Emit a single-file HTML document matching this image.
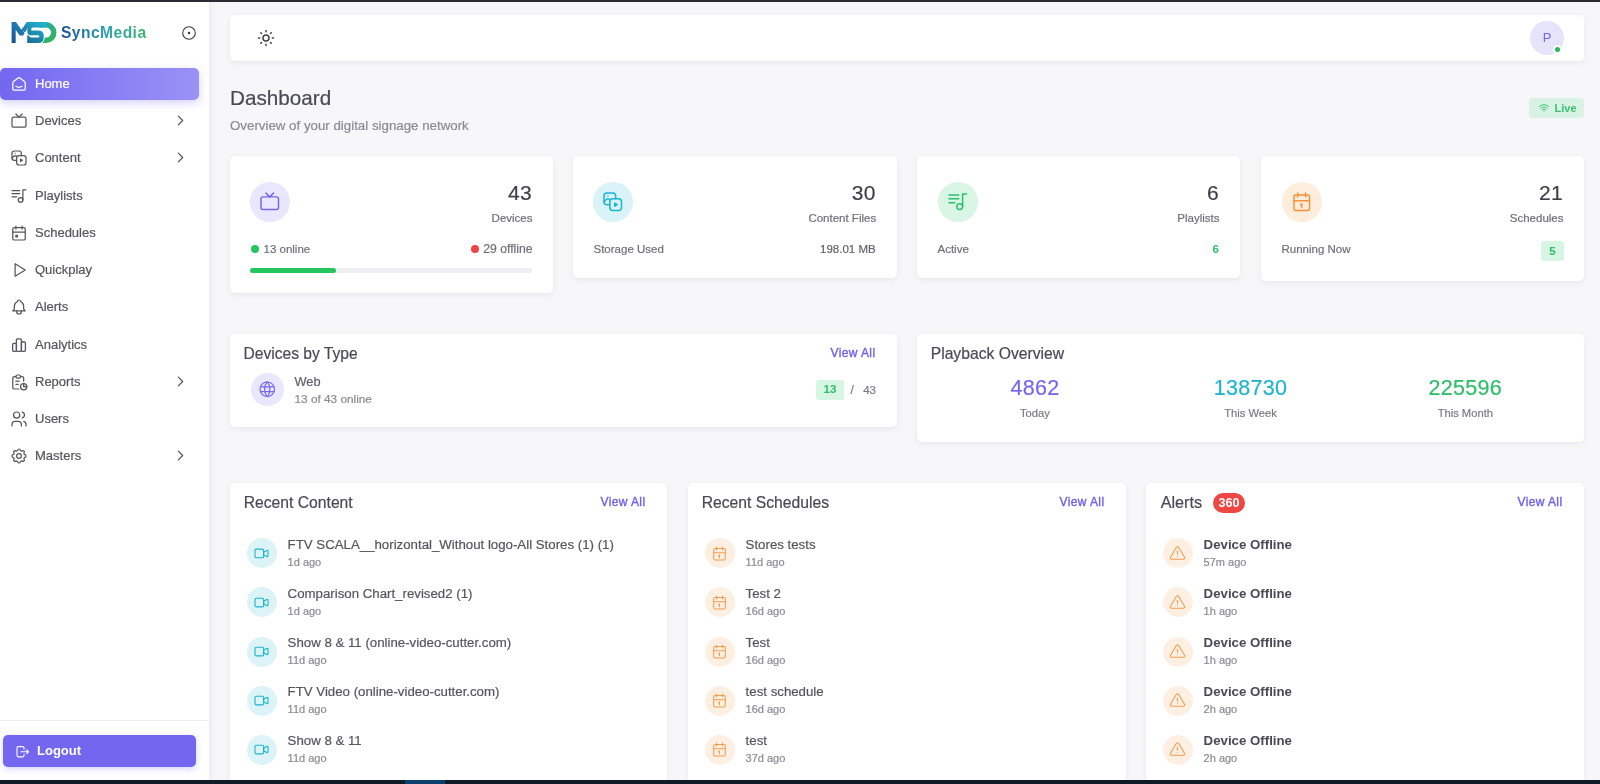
<!DOCTYPE html>
<html><head><meta charset="utf-8">
<style>
*{box-sizing:border-box;margin:0;padding:0}
html,body{width:1600px;height:784px;overflow:hidden}
body{font-family:"Liberation Sans",sans-serif;background:#f7f7fa;position:relative;color:#4b4b58}
svg{display:block;overflow:visible}
.topbar{position:absolute;z-index:5;left:0;top:0;width:1600px;height:2px;background:#2b2b33}
.botbar{position:absolute;left:0;top:780px;width:1600px;height:4px;background:#0f1b26}
.botbar i{position:absolute;left:405px;top:0;width:40px;height:4px;background:#0b3f6e}
.side{position:absolute;left:0;top:0;width:209px;height:780px;background:#fff;box-shadow:2px 0 6px rgba(60,60,90,.07)}
.card{position:absolute;background:#fff;border-radius:5px;box-shadow:0 2px 6px rgba(60,60,90,.08)}
.abs{position:absolute;white-space:nowrap}
.card,.side{will-change:transform}
body>div.abs{will-change:transform}
body{-webkit-text-stroke:.2px}
.mi{position:absolute;left:0;width:199px;height:32px;color:#55555f;font-size:13px}
.mi .ic{position:absolute;left:11.5px;top:9px}
.mi .tx{position:absolute;left:35px;top:0;line-height:32px}
.mi .cv{position:absolute;left:174px;top:9px}
.mi.act{background:linear-gradient(90deg,#7367f0,#9a92f6);color:#fff;border-radius:5px;box-shadow:0 3px 8px rgba(115,103,240,.3)}
</style></head><body>
<div class="topbar"></div>

<div class="side">
<svg class="abs" style="left:9px;top:19px" width="50" height="27" viewBox="0 0 50 27"><defs><linearGradient id="lgm" gradientUnits="userSpaceOnUse" x1="2" y1="24" x2="22" y2="3"><stop offset="0" stop-color="#1a4f90"/><stop offset="1" stop-color="#2596c9"/></linearGradient><linearGradient id="lgs" gradientUnits="userSpaceOnUse" x1="18" y1="24" x2="30" y2="3"><stop offset="0" stop-color="#1a6a92"/><stop offset="1" stop-color="#1fb0cf"/></linearGradient><linearGradient id="lgd" gradientUnits="userSpaceOnUse" x1="30" y1="3" x2="44" y2="24"><stop offset="0" stop-color="#22a9b8"/><stop offset="1" stop-color="#35b552"/></linearGradient></defs>
<path fill="url(#lgm)" d="M2.6 24.1V3.1H6.9L12.4 10.8L17.9 3.1H22L14.2 16.6H10.6L6.7 10.8V24.1Z"/>
<path fill="url(#lgd)" d="M30 3.1H37A10.5 10.5 0 0 1 37 24.1H33.6L36.2 18.6H37A5 5 0 0 0 37 8.6H30Z"/>
<path fill="url(#lgs)" d="M19.3 3.1H37.5V8.5H23.6Q22 8.5 22.4 11.4H30Q34.8 11.4 34.8 17.6Q34.8 24.1 30 24.1H18.2V15.6L21.6 18.6H29.6Q30.6 18.4 30.2 17.1Q29.8 16.3 28.6 16.3H21.2Q18.3 16 18.3 11.4Q18.3 3.1 19.3 3.1Z"/>
<path d="M14.6 12.4L18.6 16.4" stroke="#fff" stroke-width=".9"/>
</svg>
<div class="abs" style="left:61px;top:24.2px;font-size:15.6px;font-weight:bold;-webkit-text-stroke:0;letter-spacing:.45px;background:linear-gradient(90deg,#1f4f97,#27a0b3 50%,#3db56a);-webkit-background-clip:text;background-clip:text;color:transparent">SyncMedia</div>
<div class="abs" style="left:182px;top:26px;color:#3a3a44"><svg width="14.0" height="14.0" viewBox="2 2 20 20" fill="none" stroke="currentColor" stroke-width="1.6" stroke-linecap="round" stroke-linejoin="round" ><path d="M11 12a1 1 0 1 0 2 0a1 1 0 1 0 -2 0" fill="currentColor"/><path d="M3 12a9 9 0 1 0 18 0a9 9 0 1 0 -18 0"/></svg></div>
<div class="mi act" style="top:68.00px"><div class="ic"><svg width="14.0" height="14.0" viewBox="3 3 18 18" fill="none" stroke="currentColor" stroke-width="1.6" stroke-linecap="round" stroke-linejoin="round" ><path d="M19 8.71l-5.333 -4.148a2.666 2.666 0 0 0 -3.274 0l-5.334 4.148a2.665 2.665 0 0 0 -1.029 2.105v7.2a2 2 0 0 0 2 2h12a2 2 0 0 0 2 -2v-7.2c0 -.823 -.38 -1.6 -1.03 -2.105"/><path d="M16 15c-2.21 1.333 -5.792 1.333 -8 0"/></svg></div><div class="tx">Home</div></div>
<div class="mi" style="top:105.22px"><div class="ic"><svg width="14.0" height="14.0" viewBox="3 3 18 18" fill="none" stroke="currentColor" stroke-width="1.6" stroke-linecap="round" stroke-linejoin="round" ><path d="M3 9a2 2 0 0 1 2 -2h14a2 2 0 0 1 2 2v9a2 2 0 0 1 -2 2h-14a2 2 0 0 1 -2 -2v-9z"/><path d="M16 3l-4 4l-4 -4"/></svg></div><div class="tx">Devices</div><div class="cv"><svg width="13.0" height="13.0" viewBox="3 3 18 18" fill="none" stroke="currentColor" stroke-width="1.7" stroke-linecap="round" stroke-linejoin="round" ><path d="M9 6l6 6l-6 6"/></svg></div></div>
<div class="mi" style="top:142.44px"><div class="ic"><svg width="14.0" height="14.0" viewBox="3 3 18 18" fill="none" stroke="currentColor" stroke-width="1.6" stroke-linecap="round" stroke-linejoin="round" ><path d="M9 15h-3a3 3 0 0 1 -3 -3v-6a3 3 0 0 1 3 -3h6a3 3 0 0 1 3 3v3"/><path d="M9 12a3 3 0 0 1 3 -3h6a3 3 0 0 1 3 3v6a3 3 0 0 1 -3 3h-6a3 3 0 0 1 -3 -3z"/><path d="M3 12l2.296 -2.296a2.41 2.41 0 0 1 3.408 0l.296 .296"/><path d="M14 13.5v3l2.5 -1.5z"/><path d="M7 6v.01"/></svg></div><div class="tx">Content</div><div class="cv"><svg width="13.0" height="13.0" viewBox="3 3 18 18" fill="none" stroke="currentColor" stroke-width="1.7" stroke-linecap="round" stroke-linejoin="round" ><path d="M9 6l6 6l-6 6"/></svg></div></div>
<div class="mi" style="top:179.66px"><div class="ic"><svg width="14.0" height="14.0" viewBox="3 3 18 18" fill="none" stroke="currentColor" stroke-width="1.6" stroke-linecap="round" stroke-linejoin="round" ><path d="M11 17a3 3 0 1 0 6 0a3 3 0 1 0 -6 0"/><path d="M17 17v-13h4"/><path d="M13 5h-10"/><path d="M3 9l10 0"/><path d="M9 13h-6"/></svg></div><div class="tx">Playlists</div></div>
<div class="mi" style="top:216.88px"><div class="ic"><svg width="14.0" height="14.0" viewBox="3 3 18 18" fill="none" stroke="currentColor" stroke-width="1.6" stroke-linecap="round" stroke-linejoin="round" ><path d="M4 7a2 2 0 0 1 2 -2h12a2 2 0 0 1 2 2v12a2 2 0 0 1 -2 2h-12a2 2 0 0 1 -2 -2z"/><path d="M16 3l0 4"/><path d="M8 3l0 4"/><path d="M4 11l16 0"/><path d="M8 15h2v2h-2z"/></svg></div><div class="tx">Schedules</div></div>
<div class="mi" style="top:254.10px"><div class="ic"><svg width="14.0" height="14.0" viewBox="3 3 18 18" fill="none" stroke="currentColor" stroke-width="1.6" stroke-linecap="round" stroke-linejoin="round" ><path d="M7 4v16l13 -8z"/></svg></div><div class="tx">Quickplay</div></div>
<div class="mi" style="top:291.32px"><div class="ic"><svg width="14.0" height="14.0" viewBox="3 3 18 18" fill="none" stroke="currentColor" stroke-width="1.6" stroke-linecap="round" stroke-linejoin="round" ><path d="M10 5a2 2 0 1 1 4 0a7 7 0 0 1 4 6v3a4 4 0 0 0 2 3h-16a4 4 0 0 0 2 -3v-3a7 7 0 0 1 4 -6"/><path d="M9 17v1a3 3 0 0 0 6 0v-1"/></svg></div><div class="tx">Alerts</div></div>
<div class="mi" style="top:328.54px"><div class="ic"><svg width="14.0" height="14.0" viewBox="0 0 14 14" fill="none" stroke="currentColor" stroke-width="1.3" stroke-linecap="round" stroke-linejoin="round" ><rect x=".65" y="5.4" width="3.75" height="7.9" rx="1"/><rect x="4.4" y=".9" width="5" height="12.4" rx="1"/><rect x="9.4" y="4" width="4" height="9.3" rx="1"/></svg></div><div class="tx">Analytics</div></div>
<div class="mi" style="top:365.76px"><div class="ic"><svg width="14.0" height="14.0" viewBox="3 3 18 18" fill="none" stroke="currentColor" stroke-width="1.6" stroke-linecap="round" stroke-linejoin="round" ><path d="M8 5h-2a2 2 0 0 0 -2 2v12a2 2 0 0 0 2 2h5.697"/><path d="M18 14v4h4"/><path d="M18 11v-4a2 2 0 0 0 -2 -2h-2"/><path d="M8 5a2 2 0 0 1 2 -2h2a2 2 0 0 1 2 2v0a2 2 0 0 1 -2 2h-2a2 2 0 0 1 -2 -2z"/><path d="M14 18a4 4 0 1 0 8 0a4 4 0 1 0 -8 0"/><path d="M8 11h4"/><path d="M8 15h3"/></svg></div><div class="tx">Reports</div><div class="cv"><svg width="13.0" height="13.0" viewBox="3 3 18 18" fill="none" stroke="currentColor" stroke-width="1.7" stroke-linecap="round" stroke-linejoin="round" ><path d="M9 6l6 6l-6 6"/></svg></div></div>
<div class="mi" style="top:402.98px"><div class="ic"><svg width="14.0" height="14.0" viewBox="3 3 18 18" fill="none" stroke="currentColor" stroke-width="1.6" stroke-linecap="round" stroke-linejoin="round" ><path d="M5 7a4 4 0 1 0 8 0a4 4 0 1 0 -8 0"/><path d="M3 21v-2a4 4 0 0 1 4 -4h4a4 4 0 0 1 4 4v2"/><path d="M16 3.13a4 4 0 0 1 0 7.75"/><path d="M21 21v-2a4 4 0 0 0 -3 -3.85"/></svg></div><div class="tx">Users</div></div>
<div class="mi" style="top:440.20px"><div class="ic"><svg width="14.0" height="14.0" viewBox="3 3 18 18" fill="none" stroke="currentColor" stroke-width="1.6" stroke-linecap="round" stroke-linejoin="round" ><path d="M10.325 4.317c.426 -1.756 2.924 -1.756 3.35 0a1.724 1.724 0 0 0 2.573 1.066c1.543 -.94 3.31 .826 2.37 2.37a1.724 1.724 0 0 0 1.065 2.572c1.756 .426 1.756 2.924 0 3.35a1.724 1.724 0 0 0 -1.066 2.573c.94 1.543 -.826 3.31 -2.37 2.37a1.724 1.724 0 0 0 -2.572 1.065c-.426 1.756 -2.924 1.756 -3.35 0a1.724 1.724 0 0 0 -2.573 -1.066c-1.543 .94 -3.31 -.826 -2.37 -2.37a1.724 1.724 0 0 0 -1.065 -2.572c-1.756 -.426 -1.756 -2.924 0 -3.35a1.724 1.724 0 0 0 1.066 -2.573c-.94 -1.543 .826 -3.31 2.37 -2.37c1 .608 2.296 .07 2.572 -1.065z"/><path d="M9 12a3 3 0 1 0 6 0a3 3 0 0 0 -6 0"/></svg></div><div class="tx">Masters</div><div class="cv"><svg width="13.0" height="13.0" viewBox="3 3 18 18" fill="none" stroke="currentColor" stroke-width="1.7" stroke-linecap="round" stroke-linejoin="round" ><path d="M9 6l6 6l-6 6"/></svg></div></div>
<div class="abs" style="left:0;top:720px;width:209px;height:1px;background:#ececf0"></div>
<div class="abs" style="left:3px;top:735px;width:193px;height:32px;background:#7367f0;border-radius:5px;box-shadow:0 2px 6px rgba(115,103,240,.3);color:#fff"><div class="abs" style="left:14px;top:10.5px"><svg width="11.5" height="11.5" viewBox="3 3 18 18" fill="none" stroke="currentColor" stroke-width="1.7" stroke-linecap="round" stroke-linejoin="round" ><path d="M14 8v-2a2 2 0 0 0 -2 -2h-7a2 2 0 0 0 -2 2v12a2 2 0 0 0 2 2h7a2 2 0 0 0 2 -2v-2"/><path d="M9 12h12l-3 -3"/><path d="M18 15l3 -3"/></svg></div><div class="abs" style="left:34px;top:0;line-height:32px;font-size:13px;font-weight:bold;-webkit-text-stroke:0">Logout</div></div>
</div>
<div class="card" style="left:230px;top:15px;width:1354px;height:46px">
  <div class="abs" style="left:27px;top:14px;color:#44444e"><svg width="18.0" height="18.0" viewBox="3 3 18 18" fill="none" stroke="currentColor" stroke-width="1.5" stroke-linecap="round" stroke-linejoin="round" ><path d="M9 12a3 3 0 1 0 6 0a3 3 0 1 0 -6 0"/><path d="M12 4.5v1.2M12 18.3v1.2M4.5 12h1.2M18.3 12h1.2M6.7 6.7l.85 .85M16.45 16.45l.85 .85M6.7 17.3l.85 -.85M16.45 7.55l.85 -.85"/></svg></div>
  <div class="abs" style="left:1300px;top:6px;width:34px;height:34px;border-radius:50%;background:#e6e4fb;color:#7367f0;font-size:13px;line-height:34px;text-align:center;-webkit-text-stroke:0">P</div>
  <div class="abs" style="left:1325.1px;top:31.7px;width:5.2px;height:5.2px;border-radius:50%;background:#23b85c;box-shadow:0 0 0 2px #fff"></div>
</div>
<div class="abs" style="left:230px;top:85.8px;font-size:20.7px;color:#4a4a57">Dashboard</div>
<div class="abs" style="left:230px;top:118px;font-size:13.3px;color:#8a8a95">Overview of your digital signage network</div>
<div class="abs" style="left:1529px;top:98px;width:55px;height:20px;border-radius:4px;background:#d8f3e3;color:#3bbf73">
  <div class="abs" style="left:10px;top:5px"><svg width="10.0" height="10.0" viewBox="3 3 18 18" fill="none" stroke="currentColor" stroke-width="1.8" stroke-linecap="round" stroke-linejoin="round" ><path d="M12 18l.01 0"/><path d="M9.172 15.172a4 4 0 0 1 5.656 0"/><path d="M6.343 12.343a8 8 0 0 1 11.314 0"/><path d="M3.515 9.515c4.686 -4.687 12.284 -4.687 17 0"/></svg></div>
  <div class="abs" style="left:25.5px;top:2.7px;font-size:11px;font-weight:bold;-webkit-text-stroke:0;line-height:14px">Live</div>
</div>

<div class="card" style="left:230px;top:156px;width:323px;height:137px"><div class="abs" style="left:20px;top:25.7px;width:40px;height:40px;border-radius:50%;background:#e9e7fd;color:#7367f0"><div class="abs" style="left:11.25px;top:11.25px"><svg width="17.5" height="17.5" viewBox="3 3 18 18" fill="none" stroke="currentColor" stroke-width="1.5" stroke-linecap="round" stroke-linejoin="round" ><path d="M3 9a2 2 0 0 1 2 -2h14a2 2 0 0 1 2 2v9a2 2 0 0 1 -2 2h-14a2 2 0 0 1 -2 -2v-9z"/><path d="M16 3l-4 4l-4 -4"/></svg></div></div><div class="abs" style="right:21px;top:24.5px;font-size:21px;line-height:24px;color:#3f3f4a;letter-spacing:.3px">43</div><div class="abs" style="right:20.5px;top:55px;font-size:11.5px;line-height:14px;color:#6f6f7b">Devices</div><div class="abs" style="left:21px;top:89px;width:8px;height:8px;border-radius:50%;background:#22c55e"></div><div class="abs" style="left:33.5px;top:86px;font-size:11.5px;line-height:14px;color:#6f6f7b">13 online</div><div class="abs" style="left:240.5px;top:89px;width:8px;height:8px;border-radius:50%;background:#ef4444"></div><div class="abs" style="right:20.5px;top:85.7px;font-size:12.2px;line-height:14px;color:#6f6f7b">29 offline</div><div class="abs" style="left:20px;top:112px;width:282px;height:4.5px;border-radius:3px;background:#efeff3"><div style="width:85.5px;height:4.5px;border-radius:3px;background:#22c55e"></div></div></div>
<div class="card" style="left:573px;top:156px;width:323.67px;height:122px"><div class="abs" style="left:20px;top:25.7px;width:40px;height:40px;border-radius:50%;background:#d9f3f8;color:#19b4cf"><div class="abs" style="left:11.25px;top:11.25px"><svg width="17.5" height="17.5" viewBox="3 3 18 18" fill="none" stroke="currentColor" stroke-width="1.5" stroke-linecap="round" stroke-linejoin="round" ><path d="M9 15h-3a3 3 0 0 1 -3 -3v-6a3 3 0 0 1 3 -3h6a3 3 0 0 1 3 3v3"/><path d="M9 12a3 3 0 0 1 3 -3h6a3 3 0 0 1 3 3v6a3 3 0 0 1 -3 3h-6a3 3 0 0 1 -3 -3z"/><path d="M3 12l2.296 -2.296a2.41 2.41 0 0 1 3.408 0l.296 .296"/><path d="M14 13.5v3l2.5 -1.5z"/><path d="M7 6v.01"/></svg></div></div><div class="abs" style="right:21px;top:24.5px;font-size:21px;line-height:24px;color:#3f3f4a;letter-spacing:.3px">30</div><div class="abs" style="right:20.5px;top:55px;font-size:11.5px;line-height:14px;color:#6f6f7b">Content Files</div><div class="abs" style="left:20.5px;top:86px;font-size:11.5px;line-height:14px;color:#6f6f7b">Storage Used</div><div class="abs" style="right:21px;top:86px;font-size:11.5px;line-height:14px;color:#62626e">198.01 MB</div></div>
<div class="card" style="left:917.33px;top:156px;width:323px;height:122px"><div class="abs" style="left:21px;top:25.7px;width:40px;height:40px;border-radius:50%;background:#d9f5e4;color:#28c06a"><div class="abs" style="left:11.25px;top:11.25px"><svg width="17.5" height="17.5" viewBox="3 3 18 18" fill="none" stroke="currentColor" stroke-width="1.5" stroke-linecap="round" stroke-linejoin="round" ><path d="M11 17a3 3 0 1 0 6 0a3 3 0 1 0 -6 0"/><path d="M17 17v-13h4"/><path d="M13 5h-10"/><path d="M3 9l10 0"/><path d="M9 13h-6"/></svg></div></div><div class="abs" style="right:21px;top:24.5px;font-size:21px;line-height:24px;color:#3f3f4a;letter-spacing:.3px">6</div><div class="abs" style="right:20.5px;top:55px;font-size:11.5px;line-height:14px;color:#6f6f7b">Playlists</div><div class="abs" style="left:20.5px;top:86px;font-size:11.5px;line-height:14px;color:#6f6f7b">Active</div><div class="abs" style="right:21px;top:86px;font-size:11.5px;line-height:14px;color:#28c06a;font-weight:bold;-webkit-text-stroke:0">6</div></div>
<div class="card" style="left:1261px;top:156px;width:323px;height:125px"><div class="abs" style="left:20.5px;top:25.8px;width:40px;height:40px;border-radius:50%;background:#fdeddc;color:#f7913a"><div class="abs" style="left:11.25px;top:11.25px"><svg width="17.5" height="17.5" viewBox="3 3 18 18" fill="none" stroke="currentColor" stroke-width="1.5" stroke-linecap="round" stroke-linejoin="round" ><path d="M4 7a2 2 0 0 1 2 -2h12a2 2 0 0 1 2 2v12a2 2 0 0 1 -2 2h-12a2 2 0 0 1 -2 -2z"/><path d="M16 3v4"/><path d="M8 3v4"/><path d="M4 11h16"/><path d="M11 15l1 -1v4"/></svg></div></div><div class="abs" style="right:21px;top:24.5px;font-size:21px;line-height:24px;color:#3f3f4a;letter-spacing:.3px">21</div><div class="abs" style="right:20.5px;top:55px;font-size:11.5px;line-height:14px;color:#6f6f7b">Schedules</div><div class="abs" style="left:20.5px;top:86px;font-size:11.5px;line-height:14px;color:#6f6f7b">Running Now</div><div class="abs" style="left:280px;top:85px;width:23px;height:20px;border-radius:3px;background:#d6f5e2;color:#28c06a;font-size:11.5px;font-weight:bold;-webkit-text-stroke:0;line-height:20px;text-align:center">5</div></div>
<div class="card" style="left:230px;top:334px;width:667px;height:93px">
  <div class="abs" style="left:13.5px;top:10.5px;font-size:15.6px;line-height:18px;color:#4a4a57">Devices by Type</div>
  <div class="abs" style="right:21.5px;top:12px;font-size:12px;line-height:14px;color:#6c60ea;letter-spacing:.4px;-webkit-text-stroke:.35px">View All</div>
  <div class="abs" style="left:20.5px;top:39px;width:33px;height:33px;border-radius:50%;background:#e9e7fd;color:#7367f0"><div class="abs" style="left:9.25px;top:9.25px"><svg width="14.5" height="14.5" viewBox="3 3 18 18" fill="none" stroke="currentColor" stroke-width="1.5" stroke-linecap="round" stroke-linejoin="round" ><path d="M3 12a9 9 0 1 0 18 0a9 9 0 0 0 -18 0"/><path d="M3.6 9h16.8"/><path d="M3.6 15h16.8"/><path d="M11.5 3a17 17 0 0 0 0 18"/><path d="M12.5 3a17 17 0 0 1 0 18"/></svg></div></div>
  <div class="abs" style="left:64.5px;top:40px;font-size:12.8px;line-height:15px;color:#60606c">Web</div>
  <div class="abs" style="left:64.5px;top:57.5px;font-size:11.8px;line-height:14px;color:#8a8a95">13 of 43 online</div>
  <div class="abs" style="left:586px;top:46px;width:28px;height:19.5px;border-radius:3px;background:#d6f5e2;color:#28c06a;font-size:11.5px;font-weight:bold;-webkit-text-stroke:0;line-height:19.5px;text-align:center">13</div>
  <div class="abs" style="left:620.5px;top:48.5px;font-size:12px;line-height:14px;color:#7a7a86">/</div>
  <div class="abs" style="right:21px;top:48.5px;font-size:11.5px;line-height:14px;color:#7a7a86">43</div>
</div>
<div class="card" style="left:917.33px;top:334px;width:666.67px;height:108px">
  <div class="abs" style="left:13.7px;top:10.5px;font-size:15.7px;line-height:18px;color:#4a4a57">Playback Overview</div>
  <div class="abs" style="left:17.9px;top:41.5px;width:200px;text-align:center;font-size:21.5px;line-height:24px;color:#7367f0;letter-spacing:.3px">4862</div>
  <div class="abs" style="left:17.9px;top:72px;width:200px;text-align:center;font-size:11.2px;line-height:14px;color:#7a7a86">Today</div>
  <div class="abs" style="left:233.6px;top:41.5px;width:200px;text-align:center;font-size:21.5px;line-height:24px;color:#1fb5cf;letter-spacing:.3px">138730</div>
  <div class="abs" style="left:233.6px;top:72px;width:200px;text-align:center;font-size:11.2px;line-height:14px;color:#7a7a86">This Week</div>
  <div class="abs" style="left:448.3px;top:41.5px;width:200px;text-align:center;font-size:21.5px;line-height:24px;color:#2bbf68;letter-spacing:.3px">225596</div>
  <div class="abs" style="left:448.3px;top:72px;width:200px;text-align:center;font-size:11.2px;line-height:14px;color:#7a7a86">This Month</div>
</div>

<div class="card" style="left:230px;top:483px;width:437px;height:320px"><div class="abs" style="left:13.7px;top:10.7px;font-size:15.7px;line-height:18px;color:#4a4a57">Recent Content</div><div class="abs" style="right:21.5px;top:12px;font-size:12px;line-height:14px;color:#6c60ea;letter-spacing:.4px;-webkit-text-stroke:.35px">View All</div><div class="abs" style="left:16.5px;top:55.40px;width:30px;height:30px;border-radius:50%;background:#dcf3f7;color:#19b4cf"><div class="abs" style="left:8.5px;top:8.5px"><svg width="13.0" height="13.0" viewBox="3 3 18 18" fill="none" stroke="currentColor" stroke-width="1.5" stroke-linecap="round" stroke-linejoin="round" ><path d="M15 10l4.553 -2.276a1 1 0 0 1 1.447 .894v6.764a1 1 0 0 1 -1.447 .894l-4.553 -2.276v-4z"/><path d="M3 8a2 2 0 0 1 2 -2h8a2 2 0 0 1 2 2v8a2 2 0 0 1 -2 2h-8a2 2 0 0 1 -2 -2z"/></svg></div></div><div class="abs" style="left:57.6px;top:53.90px;font-size:13.25px;line-height:16px;color:#55555f;">FTV SCALA__horizontal_Without logo-All Stores (1) (1)</div><div class="abs" style="left:57.6px;top:72.90px;font-size:11px;line-height:13px;color:#8a8a95">1d ago</div><div class="abs" style="left:16.5px;top:104.45px;width:30px;height:30px;border-radius:50%;background:#dcf3f7;color:#19b4cf"><div class="abs" style="left:8.5px;top:8.5px"><svg width="13.0" height="13.0" viewBox="3 3 18 18" fill="none" stroke="currentColor" stroke-width="1.5" stroke-linecap="round" stroke-linejoin="round" ><path d="M15 10l4.553 -2.276a1 1 0 0 1 1.447 .894v6.764a1 1 0 0 1 -1.447 .894l-4.553 -2.276v-4z"/><path d="M3 8a2 2 0 0 1 2 -2h8a2 2 0 0 1 2 2v8a2 2 0 0 1 -2 2h-8a2 2 0 0 1 -2 -2z"/></svg></div></div><div class="abs" style="left:57.6px;top:102.95px;font-size:13.25px;line-height:16px;color:#55555f;">Comparison Chart_revised2 (1)</div><div class="abs" style="left:57.6px;top:121.95px;font-size:11px;line-height:13px;color:#8a8a95">1d ago</div><div class="abs" style="left:16.5px;top:153.50px;width:30px;height:30px;border-radius:50%;background:#dcf3f7;color:#19b4cf"><div class="abs" style="left:8.5px;top:8.5px"><svg width="13.0" height="13.0" viewBox="3 3 18 18" fill="none" stroke="currentColor" stroke-width="1.5" stroke-linecap="round" stroke-linejoin="round" ><path d="M15 10l4.553 -2.276a1 1 0 0 1 1.447 .894v6.764a1 1 0 0 1 -1.447 .894l-4.553 -2.276v-4z"/><path d="M3 8a2 2 0 0 1 2 -2h8a2 2 0 0 1 2 2v8a2 2 0 0 1 -2 2h-8a2 2 0 0 1 -2 -2z"/></svg></div></div><div class="abs" style="left:57.6px;top:152.00px;font-size:13.25px;line-height:16px;color:#55555f;">Show 8 &amp; 11 (online-video-cutter.com)</div><div class="abs" style="left:57.6px;top:171.00px;font-size:11px;line-height:13px;color:#8a8a95">11d ago</div><div class="abs" style="left:16.5px;top:202.55px;width:30px;height:30px;border-radius:50%;background:#dcf3f7;color:#19b4cf"><div class="abs" style="left:8.5px;top:8.5px"><svg width="13.0" height="13.0" viewBox="3 3 18 18" fill="none" stroke="currentColor" stroke-width="1.5" stroke-linecap="round" stroke-linejoin="round" ><path d="M15 10l4.553 -2.276a1 1 0 0 1 1.447 .894v6.764a1 1 0 0 1 -1.447 .894l-4.553 -2.276v-4z"/><path d="M3 8a2 2 0 0 1 2 -2h8a2 2 0 0 1 2 2v8a2 2 0 0 1 -2 2h-8a2 2 0 0 1 -2 -2z"/></svg></div></div><div class="abs" style="left:57.6px;top:201.05px;font-size:13.25px;line-height:16px;color:#55555f;">FTV Video (online-video-cutter.com)</div><div class="abs" style="left:57.6px;top:220.05px;font-size:11px;line-height:13px;color:#8a8a95">11d ago</div><div class="abs" style="left:16.5px;top:251.60px;width:30px;height:30px;border-radius:50%;background:#dcf3f7;color:#19b4cf"><div class="abs" style="left:8.5px;top:8.5px"><svg width="13.0" height="13.0" viewBox="3 3 18 18" fill="none" stroke="currentColor" stroke-width="1.5" stroke-linecap="round" stroke-linejoin="round" ><path d="M15 10l4.553 -2.276a1 1 0 0 1 1.447 .894v6.764a1 1 0 0 1 -1.447 .894l-4.553 -2.276v-4z"/><path d="M3 8a2 2 0 0 1 2 -2h8a2 2 0 0 1 2 2v8a2 2 0 0 1 -2 2h-8a2 2 0 0 1 -2 -2z"/></svg></div></div><div class="abs" style="left:57.6px;top:250.10px;font-size:13.25px;line-height:16px;color:#55555f;">Show 8 &amp; 11</div><div class="abs" style="left:57.6px;top:269.10px;font-size:11px;line-height:13px;color:#8a8a95">11d ago</div></div>
<div class="card" style="left:688px;top:483px;width:438px;height:320px"><div class="abs" style="left:13.7px;top:10.7px;font-size:15.7px;line-height:18px;color:#4a4a57">Recent Schedules</div><div class="abs" style="right:21.5px;top:12px;font-size:12px;line-height:14px;color:#6c60ea;letter-spacing:.4px;-webkit-text-stroke:.35px">View All</div><div class="abs" style="left:16.5px;top:55.40px;width:30px;height:30px;border-radius:50%;background:#fdf0e2;color:#f59a4e"><div class="abs" style="left:8.5px;top:8.5px"><svg width="13.0" height="13.0" viewBox="3 3 18 18" fill="none" stroke="currentColor" stroke-width="1.4" stroke-linecap="round" stroke-linejoin="round" ><path d="M4 7a2 2 0 0 1 2 -2h12a2 2 0 0 1 2 2v12a2 2 0 0 1 -2 2h-12a2 2 0 0 1 -2 -2z"/><path d="M16 3v4"/><path d="M8 3v4"/><path d="M4 11h16"/><path d="M11 15l1 -1v4"/></svg></div></div><div class="abs" style="left:57.6px;top:53.90px;font-size:13.25px;line-height:16px;color:#55555f;">Stores tests</div><div class="abs" style="left:57.6px;top:72.90px;font-size:11px;line-height:13px;color:#8a8a95">11d ago</div><div class="abs" style="left:16.5px;top:104.45px;width:30px;height:30px;border-radius:50%;background:#fdf0e2;color:#f59a4e"><div class="abs" style="left:8.5px;top:8.5px"><svg width="13.0" height="13.0" viewBox="3 3 18 18" fill="none" stroke="currentColor" stroke-width="1.4" stroke-linecap="round" stroke-linejoin="round" ><path d="M4 7a2 2 0 0 1 2 -2h12a2 2 0 0 1 2 2v12a2 2 0 0 1 -2 2h-12a2 2 0 0 1 -2 -2z"/><path d="M16 3v4"/><path d="M8 3v4"/><path d="M4 11h16"/><path d="M11 15l1 -1v4"/></svg></div></div><div class="abs" style="left:57.6px;top:102.95px;font-size:13.25px;line-height:16px;color:#55555f;">Test 2</div><div class="abs" style="left:57.6px;top:121.95px;font-size:11px;line-height:13px;color:#8a8a95">16d ago</div><div class="abs" style="left:16.5px;top:153.50px;width:30px;height:30px;border-radius:50%;background:#fdf0e2;color:#f59a4e"><div class="abs" style="left:8.5px;top:8.5px"><svg width="13.0" height="13.0" viewBox="3 3 18 18" fill="none" stroke="currentColor" stroke-width="1.4" stroke-linecap="round" stroke-linejoin="round" ><path d="M4 7a2 2 0 0 1 2 -2h12a2 2 0 0 1 2 2v12a2 2 0 0 1 -2 2h-12a2 2 0 0 1 -2 -2z"/><path d="M16 3v4"/><path d="M8 3v4"/><path d="M4 11h16"/><path d="M11 15l1 -1v4"/></svg></div></div><div class="abs" style="left:57.6px;top:152.00px;font-size:13.25px;line-height:16px;color:#55555f;">Test</div><div class="abs" style="left:57.6px;top:171.00px;font-size:11px;line-height:13px;color:#8a8a95">16d ago</div><div class="abs" style="left:16.5px;top:202.55px;width:30px;height:30px;border-radius:50%;background:#fdf0e2;color:#f59a4e"><div class="abs" style="left:8.5px;top:8.5px"><svg width="13.0" height="13.0" viewBox="3 3 18 18" fill="none" stroke="currentColor" stroke-width="1.4" stroke-linecap="round" stroke-linejoin="round" ><path d="M4 7a2 2 0 0 1 2 -2h12a2 2 0 0 1 2 2v12a2 2 0 0 1 -2 2h-12a2 2 0 0 1 -2 -2z"/><path d="M16 3v4"/><path d="M8 3v4"/><path d="M4 11h16"/><path d="M11 15l1 -1v4"/></svg></div></div><div class="abs" style="left:57.6px;top:201.05px;font-size:13.25px;line-height:16px;color:#55555f;">test schedule</div><div class="abs" style="left:57.6px;top:220.05px;font-size:11px;line-height:13px;color:#8a8a95">16d ago</div><div class="abs" style="left:16.5px;top:251.60px;width:30px;height:30px;border-radius:50%;background:#fdf0e2;color:#f59a4e"><div class="abs" style="left:8.5px;top:8.5px"><svg width="13.0" height="13.0" viewBox="3 3 18 18" fill="none" stroke="currentColor" stroke-width="1.4" stroke-linecap="round" stroke-linejoin="round" ><path d="M4 7a2 2 0 0 1 2 -2h12a2 2 0 0 1 2 2v12a2 2 0 0 1 -2 2h-12a2 2 0 0 1 -2 -2z"/><path d="M16 3v4"/><path d="M8 3v4"/><path d="M4 11h16"/><path d="M11 15l1 -1v4"/></svg></div></div><div class="abs" style="left:57.6px;top:250.10px;font-size:13.25px;line-height:16px;color:#55555f;">test</div><div class="abs" style="left:57.6px;top:269.10px;font-size:11px;line-height:13px;color:#8a8a95">37d ago</div></div>
<div class="card" style="left:1146px;top:483px;width:438px;height:320px"><div class="abs" style="left:14.7px;top:10px;font-size:16.2px;line-height:18px;color:#4a4a57">Alerts</div><div class="abs" style="left:67px;top:9.5px;width:32px;height:20px;border-radius:10px;background:#ef4646;color:#fff;font-size:12.6px;font-weight:bold;-webkit-text-stroke:0;line-height:20px;text-align:center">360</div><div class="abs" style="right:21.5px;top:12px;font-size:12px;line-height:14px;color:#6c60ea;letter-spacing:.4px;-webkit-text-stroke:.35px">View All</div><div class="abs" style="left:16.5px;top:55.40px;width:30px;height:30px;border-radius:50%;background:#fdf0e2;color:#f59a4e"><div class="abs" style="left:8.5px;top:8.5px"><svg width="13.0" height="13.0" viewBox="3 3 18 18" fill="none" stroke="currentColor" stroke-width="1.4" stroke-linecap="round" stroke-linejoin="round" ><path d="M12 9v4"/><path d="M10.363 3.591l-8.106 13.534a1.914 1.914 0 0 0 1.636 2.871h16.214a1.914 1.914 0 0 0 1.636 -2.87l-8.106 -13.536a1.914 1.914 0 0 0 -3.274 0z"/><path d="M12 16h.01"/></svg></div></div><div class="abs" style="left:57.6px;top:53.90px;font-size:13.25px;line-height:16px;font-weight:bold;-webkit-text-stroke:0;color:#4a4a57;">Device Offline</div><div class="abs" style="left:57.6px;top:72.90px;font-size:11px;line-height:13px;color:#8a8a95">57m ago</div><div class="abs" style="left:16.5px;top:104.45px;width:30px;height:30px;border-radius:50%;background:#fdf0e2;color:#f59a4e"><div class="abs" style="left:8.5px;top:8.5px"><svg width="13.0" height="13.0" viewBox="3 3 18 18" fill="none" stroke="currentColor" stroke-width="1.4" stroke-linecap="round" stroke-linejoin="round" ><path d="M12 9v4"/><path d="M10.363 3.591l-8.106 13.534a1.914 1.914 0 0 0 1.636 2.871h16.214a1.914 1.914 0 0 0 1.636 -2.87l-8.106 -13.536a1.914 1.914 0 0 0 -3.274 0z"/><path d="M12 16h.01"/></svg></div></div><div class="abs" style="left:57.6px;top:102.95px;font-size:13.25px;line-height:16px;font-weight:bold;-webkit-text-stroke:0;color:#4a4a57;">Device Offline</div><div class="abs" style="left:57.6px;top:121.95px;font-size:11px;line-height:13px;color:#8a8a95">1h ago</div><div class="abs" style="left:16.5px;top:153.50px;width:30px;height:30px;border-radius:50%;background:#fdf0e2;color:#f59a4e"><div class="abs" style="left:8.5px;top:8.5px"><svg width="13.0" height="13.0" viewBox="3 3 18 18" fill="none" stroke="currentColor" stroke-width="1.4" stroke-linecap="round" stroke-linejoin="round" ><path d="M12 9v4"/><path d="M10.363 3.591l-8.106 13.534a1.914 1.914 0 0 0 1.636 2.871h16.214a1.914 1.914 0 0 0 1.636 -2.87l-8.106 -13.536a1.914 1.914 0 0 0 -3.274 0z"/><path d="M12 16h.01"/></svg></div></div><div class="abs" style="left:57.6px;top:152.00px;font-size:13.25px;line-height:16px;font-weight:bold;-webkit-text-stroke:0;color:#4a4a57;">Device Offline</div><div class="abs" style="left:57.6px;top:171.00px;font-size:11px;line-height:13px;color:#8a8a95">1h ago</div><div class="abs" style="left:16.5px;top:202.55px;width:30px;height:30px;border-radius:50%;background:#fdf0e2;color:#f59a4e"><div class="abs" style="left:8.5px;top:8.5px"><svg width="13.0" height="13.0" viewBox="3 3 18 18" fill="none" stroke="currentColor" stroke-width="1.4" stroke-linecap="round" stroke-linejoin="round" ><path d="M12 9v4"/><path d="M10.363 3.591l-8.106 13.534a1.914 1.914 0 0 0 1.636 2.871h16.214a1.914 1.914 0 0 0 1.636 -2.87l-8.106 -13.536a1.914 1.914 0 0 0 -3.274 0z"/><path d="M12 16h.01"/></svg></div></div><div class="abs" style="left:57.6px;top:201.05px;font-size:13.25px;line-height:16px;font-weight:bold;-webkit-text-stroke:0;color:#4a4a57;">Device Offline</div><div class="abs" style="left:57.6px;top:220.05px;font-size:11px;line-height:13px;color:#8a8a95">2h ago</div><div class="abs" style="left:16.5px;top:251.60px;width:30px;height:30px;border-radius:50%;background:#fdf0e2;color:#f59a4e"><div class="abs" style="left:8.5px;top:8.5px"><svg width="13.0" height="13.0" viewBox="3 3 18 18" fill="none" stroke="currentColor" stroke-width="1.4" stroke-linecap="round" stroke-linejoin="round" ><path d="M12 9v4"/><path d="M10.363 3.591l-8.106 13.534a1.914 1.914 0 0 0 1.636 2.871h16.214a1.914 1.914 0 0 0 1.636 -2.87l-8.106 -13.536a1.914 1.914 0 0 0 -3.274 0z"/><path d="M12 16h.01"/></svg></div></div><div class="abs" style="left:57.6px;top:250.10px;font-size:13.25px;line-height:16px;font-weight:bold;-webkit-text-stroke:0;color:#4a4a57;">Device Offline</div><div class="abs" style="left:57.6px;top:269.10px;font-size:11px;line-height:13px;color:#8a8a95">2h ago</div></div>
<div class="botbar"><i></i></div>
</body></html>
